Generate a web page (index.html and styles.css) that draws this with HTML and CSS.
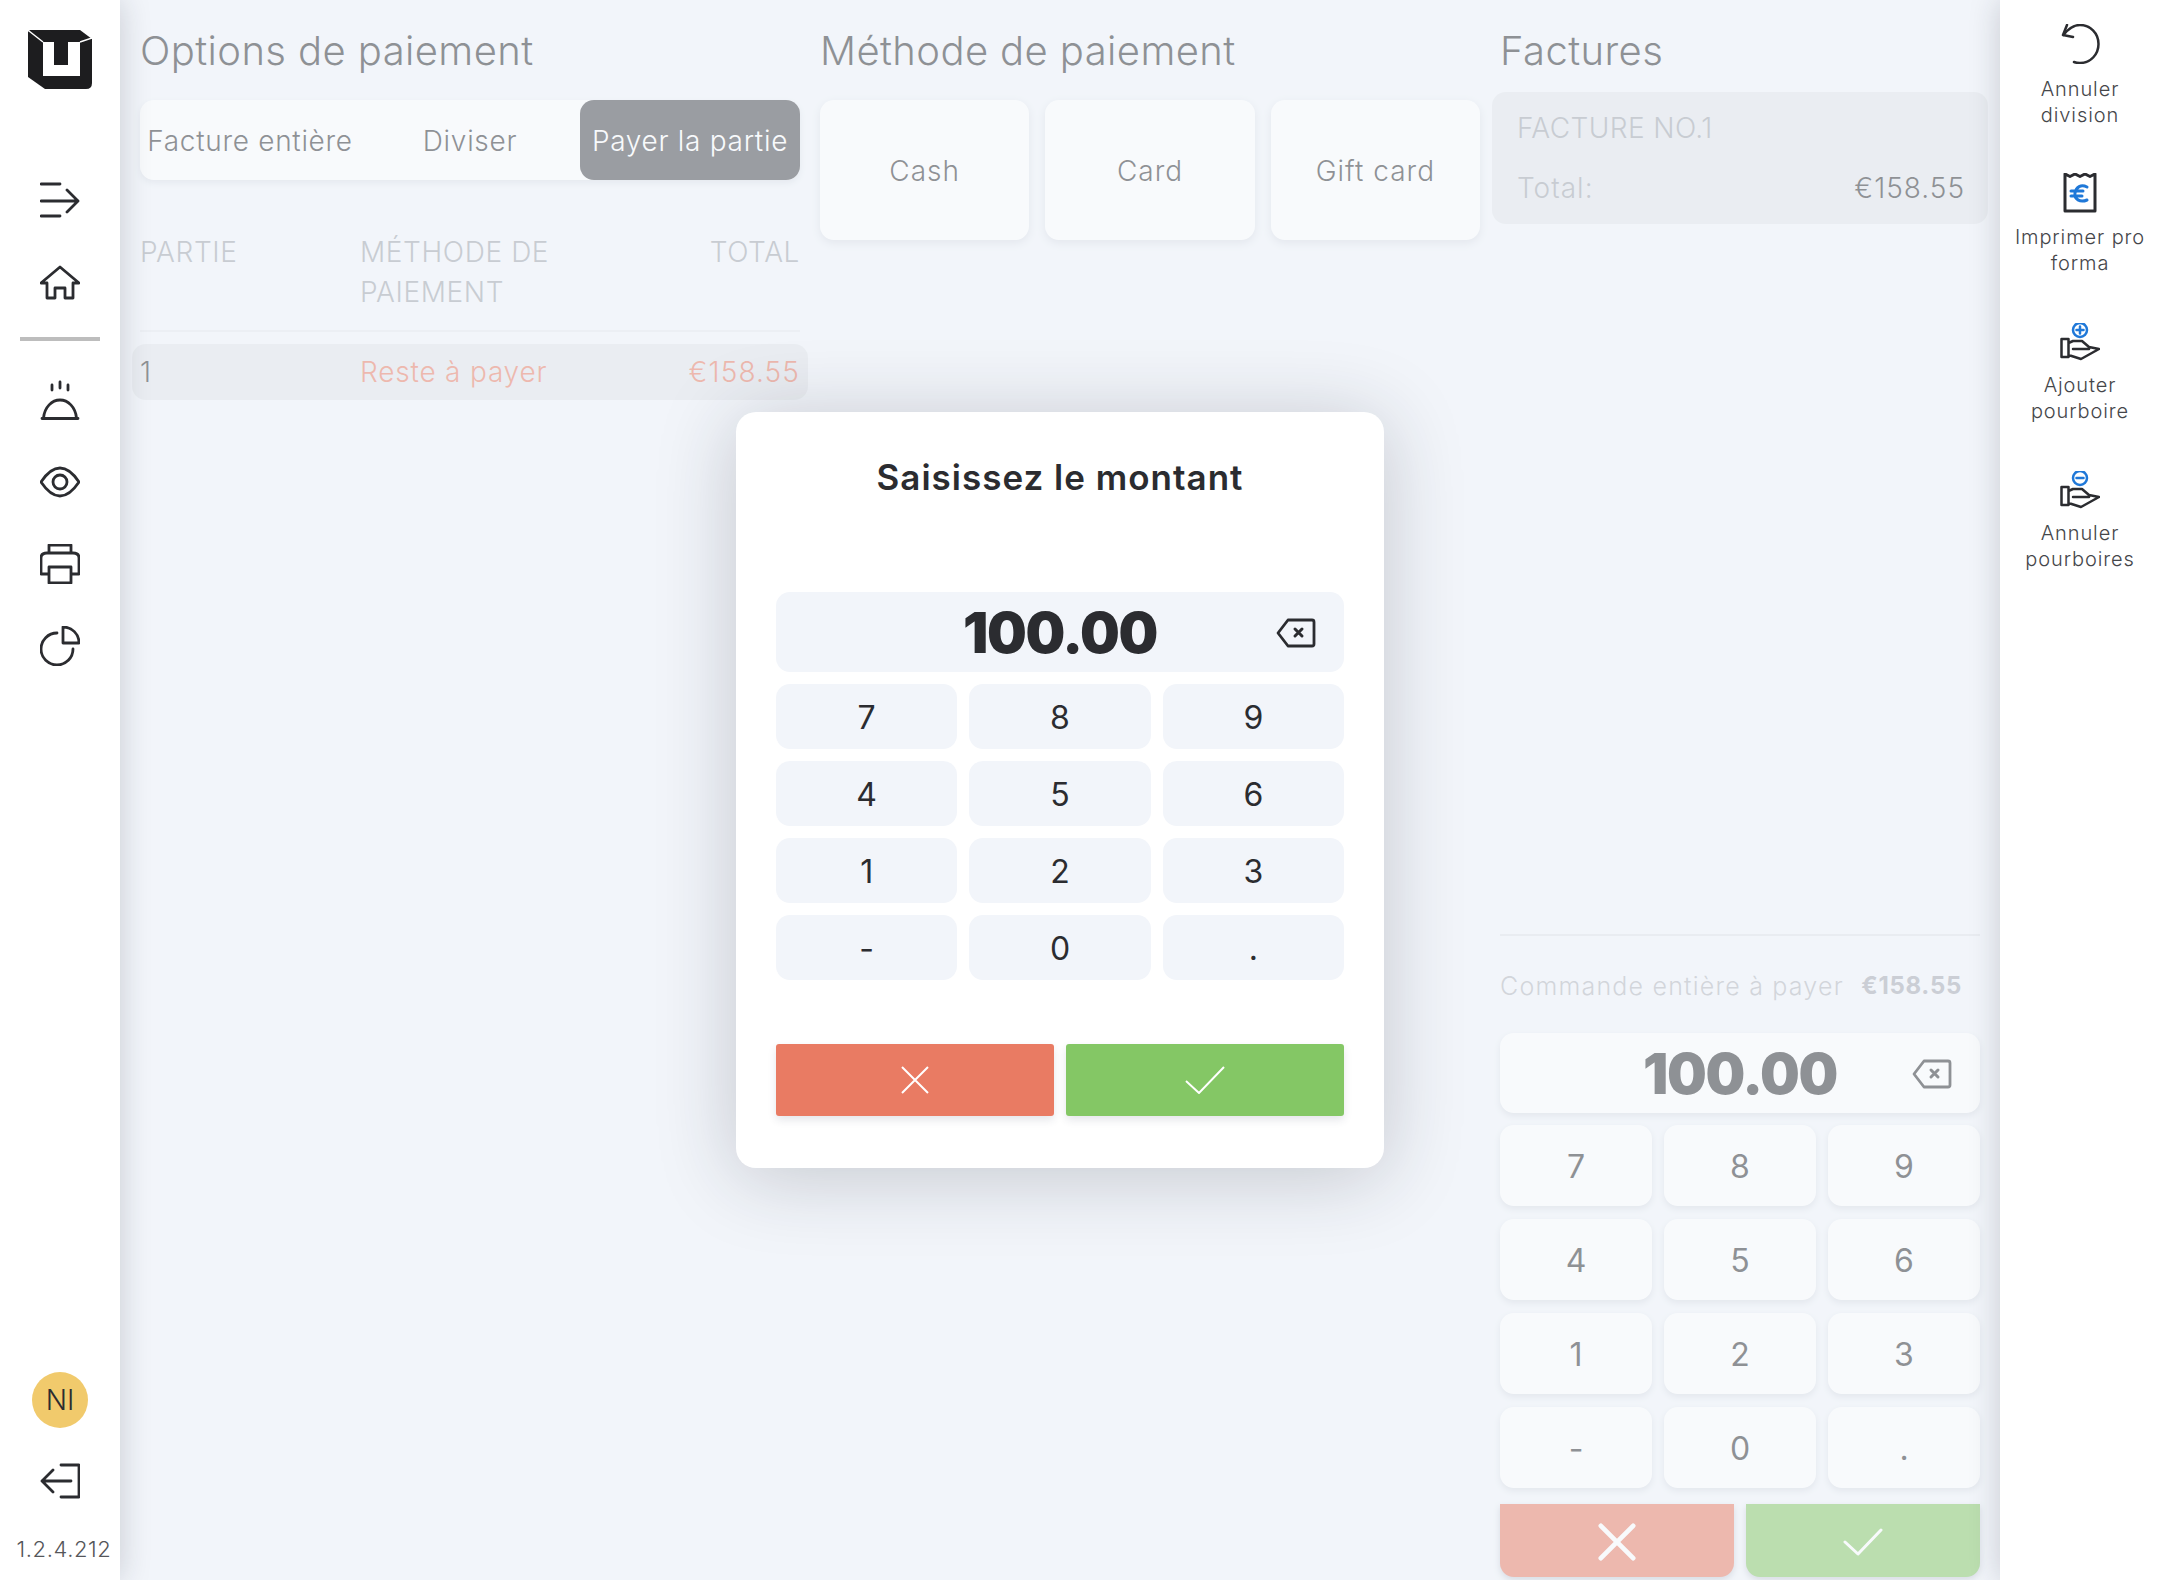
FILE: index.html
```html
<!DOCTYPE html>
<html lang="fr">
<head>
    <meta charset="utf-8">
    <meta name="viewport" content="width=device-width, initial-scale=1.0">
    <title>Paiement</title>
    <link rel="stylesheet" href="styles.css">
</head>
<body>
    <div class="appDiv">
        <nav class="leftBar">
            <svg class="logo" viewBox="0 0 64 60">
                <path class="logoBody" d="M2 0H52L64 9V53Q64 59 58 59H17L0 47V2Z"/>
                <path class="logoU" d="M15 12V46H52V12H40V35H26V12Z"/>
                <path class="logoEdge" d="M1 1L15 12M52 12L64 8"/>
            </svg>
            <div class="navGroup navTop">
                <a class="navItem"><svg class="icon" viewBox="0 0 40 40"><path d="M1 3H20M1 20H38M1 35H20M27 9L38 20L27 31"/></svg></a>
                <a class="navItem"><svg class="icon" viewBox="0 0 40 40"><path d="M1 20L20 4L39 20H33V35H25V25H15V35H7V20Z"/></svg></a>
            </div>
            <div class="navLine"></div>
            <div class="navGroup">
                <a class="navItem"><svg class="icon" viewBox="0 0 40 40"><path d="M12 5V10M20 2V8M28 5V10M2 38.500H38M3.500 38C4.500 27 12 20 20 20C28 20 35.500 27 36.500 38"/></svg></a>
                <a class="navItem"><svg class="icon" viewBox="0 0 40 40"><path d="M1 20C7 11 13 6 20 6C27 6 33 11 39 20C33 29 27 34 20 34C13 34 7 29 1 20Z"/><circle cx="20" cy="20" r="7"/></svg></a>
                <a class="navItem"><svg class="icon" viewBox="0 0 40 40"><path d="M9 9V1H31V9M9 30H1V14Q1 9 7 9H33Q39 9 39 14V30H31M9 23H31V39H9Z"/></svg></a>
                <a class="navItem"><svg class="icon" viewBox="0 0 40 40"><path d="M17 7A16 16 0 1 0 33 23M23 1C32 1 39 8 39 17H23Z"/></svg></a>
            </div>
            <div class="navBottom">
                <div class="avatar">NI</div>
                <a class="navItem logoutItem"><svg class="icon" viewBox="0 0 40 40"><path d="M21 4H39V36H21M31 20H2M13 9L2 20L13 31"/></svg></a>
                <p class="version">1.2.4.212</p>
            </div>
        </nav>

        <main class="mainDiv">
            <section class="payCol">
                <h2 class="colTitle">Options de paiement</h2>
                <div class="tabs">
                    <button class="tab">Facture entière</button>
                    <button class="tab">Diviser</button>
                    <button class="tab tabActive">Payer la partie</button>
                </div>
                <div class="tableHead">
                    <span class="cellPart">PARTIE</span>
                    <span class="cellMethod">MÉTHODE DE PAIEMENT</span>
                    <span class="cellTotal">TOTAL</span>
                </div>
                <div class="tableRow">
                    <span class="cellPart">1</span>
                    <span class="cellMethod redText">Reste à payer</span>
                    <span class="cellTotal redText">€158.55</span>
                </div>
            </section>

            <section class="payCol">
                <h2 class="colTitle">Méthode de paiement</h2>
                <div class="methods">
                    <button class="methodCard">Cash</button>
                    <button class="methodCard">Card</button>
                    <button class="methodCard">Gift card</button>
                </div>
            </section>

            <section class="payCol billCol">
                <h2 class="colTitle billTitle">Factures</h2>
                <div class="billCard">
                    <p class="billName">FACTURE NO.1</p>
                    <p class="billTotal"><span class="billLabel">Total:</span><span>€158.55</span></p>
                </div>
                <div class="billBottom">
                    <p class="wholeOrder"><span>Commande entière à payer</span><b>€158.55</b></p>
                    <div class="amountBox padBox">
                        <span class="amountText">100.00</span>
                        <svg class="backIcon" viewBox="0 0 40 30"><path d="M12 2H36Q38 2 38 4V26Q38 28 36 28H12L2 15Z"/><path class="backX" d="M19 11L26 18M26 11L19 18"/></svg>
                    </div>
                    <div class="keys padKeys">
                        <button class="key">7</button><button class="key">8</button><button class="key">9</button>
                        <button class="key">4</button><button class="key">5</button><button class="key">6</button>
                        <button class="key">1</button><button class="key">2</button><button class="key">3</button>
                        <button class="key">-</button><button class="key">0</button><button class="key">.</button>
                    </div>
                    <div class="padActions">
                        <button class="padBtn padCancel"><svg viewBox="0 0 40 40"><path d="M3 3L37 37M37 3L3 37"/></svg></button>
                        <button class="padBtn padOk"><svg viewBox="0 0 40 28"><path d="M2 14L15 26L38 2"/></svg></button>
                    </div>
                </div>
            </section>
        </main>

        <div class="overlay">
            <div class="modal">
                <h3 class="modalTitle">Saisissez le montant</h3>
                <div class="amountBox modalBox">
                    <span class="amountText">100.00</span>
                    <svg class="backIcon" viewBox="0 0 40 30"><path d="M12 2H36Q38 2 38 4V26Q38 28 36 28H12L2 15Z"/><path class="backX" d="M19 11L26 18M26 11L19 18"/></svg>
                </div>
                <div class="keys modalKeys">
                    <button class="key">7</button><button class="key">8</button><button class="key">9</button>
                    <button class="key">4</button><button class="key">5</button><button class="key">6</button>
                    <button class="key">1</button><button class="key">2</button><button class="key">3</button>
                    <button class="key">-</button><button class="key">0</button><button class="key">.</button>
                </div>
                <div class="modalActions">
                    <button class="modalBtn modalCancel"><svg class="modalX" viewBox="0 0 28 28"><path d="M1 1L27 27M27 1L1 27"/></svg></button>
                    <button class="modalBtn modalOk"><svg class="modalCheck" viewBox="0 0 40 28"><path d="M1 15L14 27L39 1"/></svg></button>
                </div>
            </div>
        </div>

        <aside class="rightBar">
            <a class="sideItem">
                <svg class="sideIcon" viewBox="0 0 40 40"><path d="M3.500 11C8 5 14 1 20 1C30 1 38.500 9 38.500 20C38.500 30 31 39 20 39C18 39 16 38.800 14 38"/><path d="M7 1L3 11L13 13"/></svg>
                <span>Annuler<br>division</span>
            </a>
            <a class="sideItem">
                <svg class="sideIcon receiptIcon" viewBox="0 0 40 40"><path class="thickLine" d="M5 1L10 3.500L15 1L20 3.500L25 1L30 3.500L35 1V38H5Z"/><path class="blueLine thickLine" d="M27 14C21 11 16 14 15 20C14 26 20 30 27 27M11 18H23M11 23H22"/></svg>
                <span>Imprimer pro<br>forma</span>
            </a>
            <a class="sideItem">
                <svg class="sideIcon handIcon" viewBox="0 0 40 40"><circle class="blueLine" cx="20" cy="7" r="7"/><path class="blueLine" d="M16.500 7H23.500M20 3.500V10.500"/><path d="M1.500 16H8.500V34H1.500ZM8.500 20L13 18H22L29 24L39 26L21 36L8.500 32M13 26H29"/></svg>
                <span>Ajouter<br>pourboire</span>
            </a>
            <a class="sideItem">
                <svg class="sideIcon handIcon" viewBox="0 0 40 40"><circle class="blueLine" cx="20" cy="7" r="7"/><path class="blueLine" d="M16.500 7H23.500"/><path d="M1.500 16H8.500V34H1.500ZM8.500 20L13 18H22L29 24L39 26L21 36L8.500 32M13 26H29"/></svg>
                <span>Annuler<br>pourboires</span>
            </a>
        </aside>
    </div>
</body>
</html>
```

FILE: styles.css
```css
* {
    box-sizing: border-box;
}
body {
    margin: 0;
    font-family: Inter, "Noto Sans", sans-serif;
    font-weight: 300;
    color: #2b2c30;
    background-color: #f2f5fa;
}
button {
    font-family: inherit;
    font-weight: inherit;
    color: inherit;
    border: none;
    padding: 2px 0 0;
}
p, h2, h3 {
    margin: 0;
}
.appDiv {
    position: relative;
    display: flex;
    width: 2160px;
    height: 1580px;
    overflow: hidden;
}

/* left bar */
.leftBar {
    position: relative;
    z-index: 3;
    display: flex;
    flex-direction: column;
    align-items: center;
    flex: 0 0 120px;
    padding-top: 30px;
    background-color: white;
    box-shadow: 0 0 30px rgba(30, 35, 50, 0.2);
}
.logo {
    width: 64px;
    height: 60px;
}
.logoBody {
    fill: #1d1d1f;
}
.logoU {
    fill: white;
}
.logoEdge {
    fill: none;
    stroke: white;
    stroke-width: 1.500;
}
.navGroup {
    display: flex;
    flex-direction: column;
    width: 100%;
}
.navTop {
    margin-top: 70px;
}
.navItem {
    display: flex;
    justify-content: center;
    align-items: center;
    height: 82px;
}
.icon {
    width: 40px;
    height: 40px;
    fill: none;
    stroke: #2b2c30;
    stroke-width: 2.800;
    stroke-linecap: round;
    stroke-linejoin: round;
}
.navLine {
    flex: 0 0 4px;
    width: 80px;
    margin: 13px 0 18px;
    background-color: #bdbdbd;
}
.navBottom {
    display: flex;
    flex-direction: column;
    align-items: center;
    width: 100%;
    margin-top: auto;
}
.avatar {
    display: flex;
    justify-content: center;
    align-items: center;
    width: 56px;
    height: 56px;
    font-size: 28px;
    border-radius: 50%;
    background-color: #f1ca6c;
}
.logoutItem {
    height: 40px;
    margin-top: 33px;
}
.version {
    margin: 33px 0 16px;
    padding-left: 8px;
    font-size: 22px;
    line-height: 30px;
    letter-spacing: 0.6px;
    color: #55565a;
}

/* main columns */
.mainDiv {
    display: flex;
    gap: 20px;
    flex: 1;
    padding: 0 20px;
}
.payCol {
    display: flex;
    flex-direction: column;
    flex: 0 0 660px;
}
.billCol {
    flex-basis: 480px;
}
.colTitle {
    height: 100px;
    padding-top: 27px;
    font-size: 40px;
    line-height: 48px;
    font-weight: 300;
    letter-spacing: 0.4px;
}
.billTitle {
    height: 92px;
}
.tabs {
    display: flex;
    height: 80px;
    border-radius: 14px;
    background-color: white;
    box-shadow: 0 3px 6px rgba(40, 50, 80, 0.12);
}
.tab {
    flex: 0 0 220px;
    font-size: 28px;
    letter-spacing: 0.7px;
    border-radius: 14px;
    background: none;
}
.tabActive {
    flex-basis: 220px;
    color: white;
    background-color: #43444a;
}
.tableHead, .tableRow {
    display: grid;
    grid-template-columns: 220px 1fr auto;
    font-size: 28px;
    line-height: 40px;
    letter-spacing: 0.6px;
}
.tableHead {
    height: 152px;
    padding-top: 52px;
    margin-bottom: 12px;
    color: #9ea3ab;
    border-bottom: 2px solid #e6e9ef;
}
.tableHead .cellMethod {
    width: 220px;
}
.tableRow {
    align-items: center;
    height: 56px;
    margin: 0 -8px;
    padding: 0 8px;
    letter-spacing: 0.8px;
    border-radius: 14px;
    background-color: #e2e5ea;
}
.tableRow .cellTotal {
    letter-spacing: 1.1px;
}
.redText {
    color: #e97b63;
}
.methods {
    display: flex;
    gap: 16px;
}
.methodCard {
    flex: 1;
    height: 140px;
    font-size: 28px;
    letter-spacing: 1px;
    border-radius: 14px;
    background-color: white;
    box-shadow: 0 3px 8px rgba(40, 50, 80, 0.14);
}
.billCard {
    display: flex;
    flex-direction: column;
    height: 132px;
    margin: 0 -8px;
    padding: 16px 23px 16px 25px;
    font-size: 28px;
    line-height: 40px;
    letter-spacing: 0.6px;
    border-radius: 14px;
    background-color: #e2e5ea;
}
.billName {
    letter-spacing: 0.4px;
}
.billName, .billLabel {
    color: #9ea3ab;
}
.billTotal {
    display: flex;
    justify-content: space-between;
    margin-top: 20px;
    letter-spacing: 1px;
}
.billBottom {
    margin-top: auto;
    padding-top: 32px;
    border-top: 2px solid #e0e3e9;
}
.wholeOrder {
    display: flex;
    justify-content: space-between;
    align-items: center;
    height: 36px;
    margin-bottom: 29px;
    padding-right: 18px;
    font-size: 25px;
    line-height: 36px;
    letter-spacing: 1.2px;
    white-space: nowrap;
    color: #b2b5bc;
}
.wholeOrder b {
    font-weight: 700;
    font-size: 24px;
    letter-spacing: 0.7px;
    color: #a4a7b0;
}
.amountBox {
    position: relative;
    display: flex;
    justify-content: center;
    align-items: center;
    height: 80px;
    padding-top: 2px;
    border-radius: 14px;
}
.padBox {
    background-color: white;
    box-shadow: 0 3px 6px rgba(40, 50, 80, 0.14);
}
.modalBox {
    background-color: #f2f5fa;
}
.amountText {
    font-size: 56px;
    font-weight: 900;
    letter-spacing: -1.3px;
}
.backIcon {
    position: absolute;
    top: 26px;
    right: 28px;
    width: 40px;
    height: 30px;
    fill: none;
    stroke: #2b2c30;
    stroke-width: 2.800;
    stroke-linejoin: round;
}
.backX {
    stroke-width: 3;
    stroke-linecap: round;
}
.keys {
    display: grid;
    grid-template-columns: repeat(3, 1fr);
}
.padKeys {
    grid-auto-rows: 81px;
    gap: 13px 12px;
    margin-top: 12px;
}
.padKeys .key {
    background-color: white;
    box-shadow: 0 3px 6px rgba(40, 50, 80, 0.14);
}
.modalKeys {
    grid-auto-rows: 65px;
    gap: 12px;
    margin-top: 12px;
}
.key {
    font-size: 32px;
    font-weight: 400;
    border-radius: 14px;
    background-color: #f2f5fa;
}
.padActions {
    display: flex;
    gap: 12px;
    height: 73px;
    margin: 16px 0 3px;
}
.padBtn {
    display: flex;
    justify-content: center;
    align-items: center;
    flex: 1;
    border-radius: 0 0 14px 14px;
    box-shadow: 0 3px 6px rgba(40, 50, 80, 0.25);
}
.padBtn svg {
    fill: none;
    stroke: white;
    stroke-linecap: round;
    stroke-linejoin: round;
}
.padCancel {
    background-color: #e97b63;
}
.padCancel svg {
    width: 38px;
    height: 38px;
    stroke-width: 5;
}
.padOk {
    background-color: #84c765;
}
.padOk svg {
    width: 40px;
    height: 28px;
    stroke-width: 3;
}

/* dialog */
.overlay {
    position: absolute;
    z-index: 2;
    top: 0;
    left: 120px;
    right: 160px;
    bottom: 0;
    display: flex;
    justify-content: center;
    align-items: center;
    background-color: rgba(242, 245, 250, 0.5);
}
.modal {
    width: 648px;
    height: 756px;
    padding: 40px;
    border-radius: 20px;
    background-color: white;
    box-shadow: 0 8px 80px rgba(30, 35, 50, 0.22);
}
.modalTitle {
    height: 140px;
    font-size: 35px;
    line-height: 50px;
    font-weight: 600;
    letter-spacing: 1px;
    text-align: center;
}
.modalActions {
    display: flex;
    gap: 12px;
    margin-top: 64px;
}
.modalBtn {
    display: flex;
    justify-content: center;
    align-items: center;
    flex: 1;
    height: 72px;
    padding: 0;
    border-radius: 3px;
    box-shadow: 0 4px 8px rgba(40, 50, 80, 0.12);
}
.modalBtn svg {
    fill: none;
    stroke: white;
    stroke-width: 2;
}
.modalCancel {
    background-color: #e97b63;
}
.modalOk {
    background-color: #84c765;
}
.modalX {
    width: 28px;
    height: 28px;
}
.modalCheck {
    width: 40px;
    height: 28px;
}

/* right bar */
.rightBar {
    position: relative;
    z-index: 3;
    display: flex;
    flex-direction: column;
    flex: 0 0 160px;
    padding-top: 24px;
    background-color: white;
    box-shadow: 0 0 30px rgba(30, 35, 50, 0.2);
}
.sideItem {
    display: flex;
    flex-direction: column;
    align-items: center;
    height: 148px;
    font-size: 20px;
    line-height: 26px;
    letter-spacing: 0.9px;
    text-align: center;
    color: #45464a;
}
.sideIcon {
    flex: 0 0 40px;
    width: 40px;
    margin-bottom: 12px;
    fill: none;
    stroke: #2b2c30;
    stroke-width: 2.500;
    stroke-linecap: round;
    stroke-linejoin: round;
}
.receiptIcon {
    margin-top: 1px;
    margin-bottom: 11px;
}
.handIcon {
    margin-top: 3px;
    margin-bottom: 9px;
}
.sideIcon .thickLine {
    stroke-width: 3;
}
.sideIcon .blueLine {
    stroke: #1f78d8;
}
```
